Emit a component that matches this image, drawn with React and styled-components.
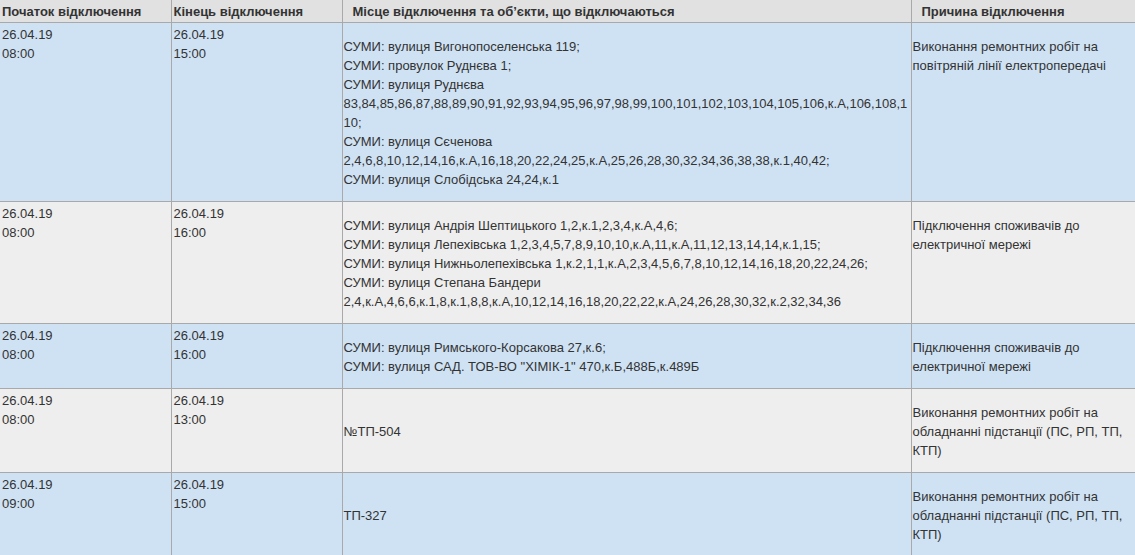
import React from 'react'
import styled, {createGlobalStyle} from 'styled-components'

const line = '#a9a9a9'
const blue = '#cfe2f3'
const grey = '#eeeeee'
const ink = '#333333'

const GlobalStyle = createGlobalStyle`
  html, body {
    margin: 0;
    padding: 0;
    background: #ffffff;
  }
  body {
    font-family: "Liberation Sans", Arial, sans-serif;
    font-size: 13px;
    color: ${ink};
  }
`

const Table = styled.table`
  width: 1135px;
  table-layout: fixed;
  border-collapse: collapse;
  border-spacing: 0;
`

const Head = styled.th`
  background-color: #e1e1e1;
  font-weight: 700;
  text-align: left;
  line-height: 19px;
  height: 19px;
  padding: 2px 2px 1px ${props => props.indent || 2}px;
  border-right: 1px solid ${line};
  border-bottom: 1px solid ${line};
  white-space: nowrap;
  &:last-child {
    border-right: none;
  }
`

const Row = styled.tr`
  background-color: ${props => (props.shade === 'grey' ? grey : blue)};
`

const Cell = styled.td`
  vertical-align: ${props => props.valign || 'top'};
  line-height: 19px;
  padding: 2px 1px 0 ${props => props.indent || 1}px;
  border-right: 1px solid ${line};
  border-bottom: 1px solid ${line};
  overflow-wrap: break-word;
  word-wrap: break-word;
  &:last-child {
    border-right: none;
  }
`

const Para = styled.p`
  margin: 12px 0;
`

const Lines = ({items}) => (
  <>
    {items.map((text, i) => (
      <React.Fragment key={i}>
        {i > 0 && <br />}
        {text}
      </React.Fragment>
    ))}
  </>
)

const repair = 'Виконання ремонтних робіт на обладнанні підстанції (ПС, РП, ТП, КТП)'
const connect = 'Підключення споживачів до електричної мережі'

const rows = [
  {
    shade: 'blue',
    start: ['26.04.19', '08:00'],
    end: ['26.04.19', '15:00'],
    places: [
      'СУМИ: вулиця Вигонопоселенська 119;',
      'СУМИ: провулок Руднєва 1;',
      'СУМИ: вулиця Руднєва 83,84,85,86,87,88,89,90,91,92,93,94,95,96,97,98,99,100,101,102,103,104,105,106,к.А,106,108,110;',
      'СУМИ: вулиця Сєченова 2,4,6,8,10,12,14,16,к.А,16,18,20,22,24,25,к.А,25,26,28,30,32,34,36,38,38,к.1,40,42;',
      'СУМИ: вулиця Слобідська 24,24,к.1',
    ],
    reason: 'Виконання ремонтних робіт на повітряній лінії електропередачі',
  },
  {
    shade: 'grey',
    start: ['26.04.19', '08:00'],
    end: ['26.04.19', '16:00'],
    places: [
      'СУМИ: вулиця Андрія Шептицького 1,2,к.1,2,3,4,к.А,4,6;',
      'СУМИ: вулиця Лепехівська 1,2,3,4,5,7,8,9,10,10,к.А,11,к.А,11,12,13,14,14,к.1,15;',
      'СУМИ: вулиця Нижньолепехівська 1,к.2,1,1,к.А,2,3,4,5,6,7,8,10,12,14,16,18,20,22,24,26;',
      'СУМИ: вулиця Степана Бандери 2,4,к.А,4,6,6,к.1,8,к.1,8,8,к.А,10,12,14,16,18,20,22,22,к.А,24,26,28,30,32,к.2,32,34,36',
    ],
    reason: connect,
  },
  {
    shade: 'blue',
    start: ['26.04.19', '08:00'],
    end: ['26.04.19', '16:00'],
    places: [
      'СУМИ: вулиця Римського-Корсакова 27,к.6;',
      'СУМИ: вулиця САД. ТОВ-ВО "ХІМІК-1" 470,к.Б,488Б,к.489Б',
    ],
    reason: connect,
  },
  {
    shade: 'grey',
    start: ['26.04.19', '08:00'],
    end: ['26.04.19', '13:00'],
    places: ['№ТП-504'],
    reason: repair,
  },
  {
    shade: 'blue',
    start: ['26.04.19', '09:00'],
    end: ['26.04.19', '15:00'],
    places: ['ТП-327'],
    reason: repair,
  },
]

export default function App() {
  return (
    <>
      <GlobalStyle />
      <Table>
        <colgroup>
          <col style={{width: 171}} />
          <col style={{width: 171}} />
          <col style={{width: 569}} />
          <col style={{width: 224}} />
        </colgroup>
        <thead>
          <tr>
            <Head>Початок відключення</Head>
            <Head>Кінець відключення</Head>
            <Head indent={10}>Місце відключення та об’єкти, що відключаються</Head>
            <Head indent={10}>Причина відключення</Head>
          </tr>
        </thead>
        <tbody>
          {rows.map((row, i) => (
            <Row key={i} shade={row.shade}>
              <Cell indent={2}>
                <Lines items={row.start} />
              </Cell>
              <Cell indent={2}>
                <Lines items={row.end} />
              </Cell>
              <Cell valign="middle">
                <Para>
                  <Lines items={row.places} />
                </Para>
              </Cell>
              <Cell>
                <Para>{row.reason}</Para>
              </Cell>
            </Row>
          ))}
        </tbody>
      </Table>
    </>
  )
}
